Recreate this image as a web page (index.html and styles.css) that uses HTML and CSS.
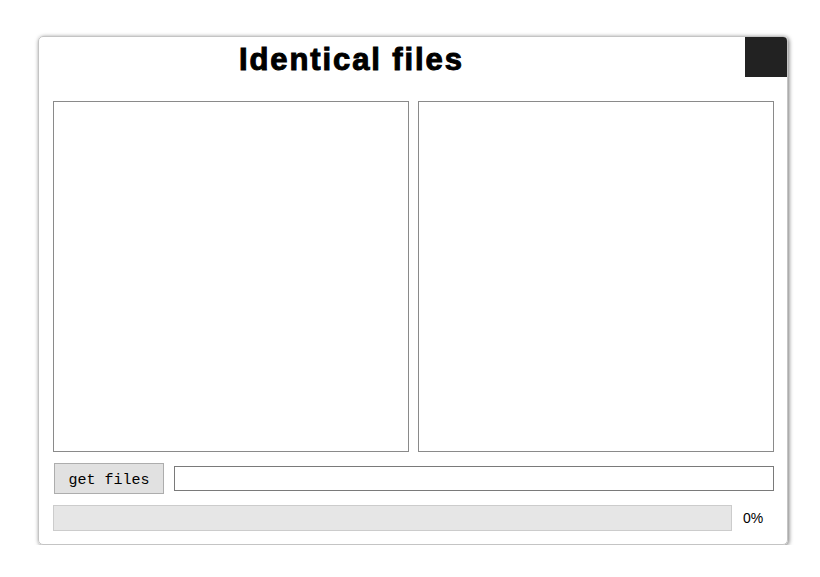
FILE: index.html
```html
<!DOCTYPE html>
<html>
<head>
<meta charset="utf-8">
<link rel="stylesheet" href="styles.css">
</head>
<body>
<div class="card">
  <div class="header">
    <h1 class="title">Identical files</h1>
    <div class="corner"></div>
  </div>
  <div class="panels">
    <div class="panel"></div>
    <div class="panel"></div>
  </div>
  <div class="controls">
    <button class="btn">get files</button>
    <input class="path" type="text">
  </div>
  <div class="progress-row">
    <div class="progress"></div>
    <span class="pct">0%</span>
  </div>
</div>
</body>
</html>
```
FILE: styles.css
```css
html, body {
  margin: 0;
  padding: 0;
  background: #fff;
}
.card {
  box-sizing: border-box;
  margin: 36px 0 0 38px;
  width: 750px;
  height: 509px;
  border: 1px solid #c4c4c4;
  border-radius: 5px;
  box-shadow: 1px 1px 4px rgba(0,0,0,0.55);
  overflow: hidden;
  display: flex;
  flex-direction: column;
}
.header {
  display: flex;
  height: 64px;
  flex-shrink: 0;
}
.title {
  margin: 0;
  padding: 6px 0 0 200px;
  font-family: "Liberation Sans", Arial, sans-serif;
  font-weight: bold;
  font-size: 31px;
  line-height: 34px;
  letter-spacing: 1.9px;
  -webkit-text-stroke: 1px #000;
  color: #000;
}
.corner {
  margin-left: auto;
  width: 42px;
  height: 40px;
  background: #222;
}
.panels {
  display: flex;
  gap: 9px;
  padding: 0 13px 0 14px;
}
.panel {
  box-sizing: border-box;
  width: 356px;
  height: 351px;
  border: 1px solid #8a8a8a;
}
.controls {
  display: flex;
  align-items: center;
  margin-top: 11px;
  padding: 0 13px 0 15px;
}
.btn {
  box-sizing: border-box;
  width: 110px;
  height: 31px;
  margin: 0;
  padding: 3px 0 0 0;
  border: 1px solid #adadad;
  background: #e1e1e1;
  font-family: "Liberation Mono", "Courier New", monospace;
  font-size: 15px;
  color: #000;
}
.path {
  box-sizing: border-box;
  flex: 1;
  height: 25px;
  margin: 0 0 0 10px;
  padding: 0;
  border: 1px solid #7a7a7a;
  background: #fff;
  outline: none;
}
.progress-row {
  display: flex;
  align-items: center;
  margin-top: 11px;
  padding: 0 0 0 14px;
}
.progress {
  box-sizing: border-box;
  width: 679px;
  height: 26px;
  background: #e6e6e6;
  border: 1px solid #cccccc;
}
.pct {
  margin-left: 11px;
  font-family: "Liberation Sans", Arial, sans-serif;
  font-size: 14px;
  color: #000;
}
```
